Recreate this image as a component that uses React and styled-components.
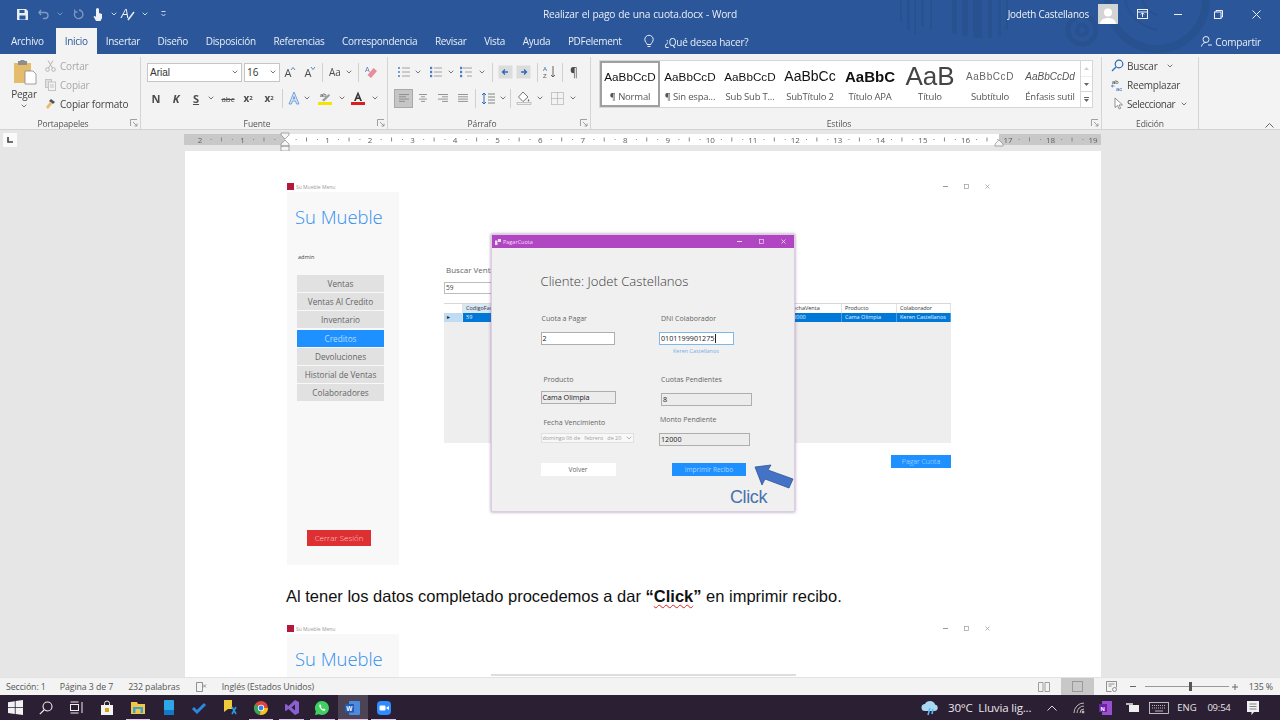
import React from 'react';
import styled, { createGlobalStyle } from 'styled-components';

const Global = createGlobalStyle`
  html, body { margin: 0; padding: 0; background: #e6e6e6; }
  * { box-sizing: border-box; }
  body { font-family: "Open Sans", "Noto Sans", sans-serif; }
`;
const UI = `"Open Sans", "Noto Sans", sans-serif`;
const Frame = styled.div`
  width: 1280px; height: 720px; overflow: hidden; display: flex; flex-direction: column;
  filter: blur(0.35px); font-family: ${UI};
`;
const Svg = styled.svg`display: block; flex: none; overflow: visible;`;

/* ---------- title bar ---------- */
const Head = styled.div`position: relative; background: #2b579a; flex: none;`;
const Deco = styled.svg`position: absolute; right: 0; top: 0; display: block; overflow: hidden;`;
const TitleBar = styled.header`
  position: relative; height: 28px; color: #fff; display: flex; align-items: center;
`;
const Qat = styled.div`display: flex; align-items: center; padding-left: 15px; width: 380px;`;
const QatBtn = styled.span`width: ${p => p.$w}px; margin-left: ${p => p.$ml ?? 0}px; display: flex; justify-content: center; align-items: center; opacity: ${p => p.$dim ? .4 : 1};`;
const DocName = styled.div`position: absolute; left: 0; right: 0; top: 7px; text-align: center; font-size: 10.2px; letter-spacing: -.2px; line-height: 14px; color: #e9eef6; word-spacing: .5px;`;
const TitleRight = styled.div`margin-left: auto; display: flex; align-items: center; position: relative;`;
const UserName = styled.span`font-size: 9.9px; letter-spacing: -.2px; color: #eef2f8; margin-right: 9px;`;
const Avatar = styled.span`width: 20px; height: 20px; background: #d4d4d4; display: flex; align-items: flex-end; justify-content: center; overflow: hidden; margin-right: 14px;`;
const WinBtn = styled.span`width: ${p => p.$w}px; display: flex; justify-content: center; align-items: center;`;

/* ---------- tabs ---------- */
const TabBar = styled.nav`
  position: relative; height: 26px; display: flex; align-items: flex-end; padding-left: 11px;
`;
const Tab = styled.span`
  height: ${p => p.$active ? 26 : 25}px; line-height: ${p => p.$active ? 26 : 25}px;
  margin-right: ${p => p.$gap ?? 17.6}px; font-size: 10px; letter-spacing: -.3px; white-space: nowrap;
  color: ${p => p.$active ? '#2b579a' : '#e8edf5'}; background: ${p => p.$active ? '#f3f3f3' : 'transparent'};
  width: ${p => p.$active ? '41px' : 'auto'}; text-align: center;
`;
const TellMe = styled.span`display: flex; align-items: center; gap: 11px; height: 25px; margin-left: 22px; font-size: 10px; letter-spacing: -.2px; color: #e8edf5;`;
const Share = styled.span`position: relative; display: flex; align-items: center; gap: 3px; height: 25px; margin-left: auto; margin-right: 19px; font-size: 10px; letter-spacing: -.2px; color: #e8edf5;`;

/* ---------- ribbon ---------- */
const Ribbon = styled.section`
  height: 76px; background: #f3f3f3; display: flex; flex: none; padding-top: 3px; border-bottom: 1px solid #d2d2d2;
`;
const Group = styled.div`
  position: relative; width: ${p => p.$w}px; height: 72px; border-right: 1px solid #d4d4d4; flex: none;
  display: flex; flex-direction: column;
`;
const GroupBody = styled.div`height: 62px; display: flex; padding-left: ${p => p.$pl ?? 0}px; flex-direction: ${p => p.$row ? 'row' : 'column'};`;
const GroupLabel = styled.div`height: 10px; line-height: 10px; text-align: center; font-size: 8.5px; letter-spacing: -.1px; color: #555; padding-right: ${p => p.$pr ?? 14}px;`;
const Launcher = styled.span`position: absolute; right: 1px; bottom: 1px; width: 9px; height: 9px;`;
const PasteCol = styled.div`width: 45px; display: flex; flex-direction: column; align-items: center; padding-top: 3px; font-size: 10px; letter-spacing: -.2px; color: #444; line-height: 12px;`;
const PasteName = styled.span`margin: 3px 3px 0 0;`;
const PasteDown = styled.span`margin: 4px 3px 0 0;`;
const ClipList = styled.div`display: flex; flex-direction: column; margin: -1px 0 0 -3px;`;
const ClipItem = styled.div`
  display: flex; align-items: center; gap: ${p => p.$gap ?? 4}px; height: 19px; font-size: 10px; letter-spacing: ${p => p.$ls ?? -.2}px; white-space: nowrap;
  color: ${p => p.$dim ? '#a8a8a8' : '#444'};
`;
const ItemDown = styled.span`margin-left: ${p => p.$ml ?? 3}px;`;
const ToolRow = styled.div`display: flex; align-items: center; height: 24px; margin-top: ${p => p.$mt ?? 0}px;`;
const Tool = styled.span`
  width: ${p => p.$w}px; height: ${p => p.$h ?? 19}px; flex: none; display: flex; align-items: center; justify-content: center;
  background: ${p => p.$on ? '#c6c6c6' : 'transparent'}; border: ${p => p.$on ? '1px solid #a9a9a9' : '0'};
  font-size: ${p => p.$fs ?? 10}px; font-weight: ${p => p.$b ? 700 : 400}; font-style: ${p => p.$i ? 'italic' : 'normal'}; color: #4c4c4c;
  text-decoration: ${p => p.$deco ?? 'none'};
`;
const Chev = styled.span`width: ${p => p.$w}px; flex: none; display: flex; justify-content: center;`;
const VSep = styled.span`width: ${p => p.$w}px; height: 19px; flex: none; display: flex; justify-content: center; &::after { content: ""; width: 1px; background: #d0d0d0; }`;
const Combo = styled.span`
  width: ${p => p.$w}px; height: 19px; flex: none; background: #fff; border: 1px solid #c6c6c6; margin-right: ${p => p.$mr ?? 0}px;
  display: flex; align-items: center; justify-content: space-between; padding: 0 3px 0 2px;
  font-family: ${p => p.$arial ? '"Liberation Sans", Arial' : UI}, sans-serif; font-size: 10px; color: #333;
`;
const Gallery = styled.div`
  margin: 3px 0 0 8px; width: 494px; height: 48px; background: #fff; border: 1px solid #d6d6d6; display: flex;
`;
const StyleCard = styled.div`
  width: 60px; height: 46px; flex: none; display: flex; flex-direction: column; align-items: center; overflow: hidden;
  border: 2px solid ${p => p.$sel ? '#a0a0a0' : 'transparent'};
`;
const Sample = styled.div`
  height: 26px; width: 56px; white-space: nowrap; display: flex; align-items: center; justify-content: center;
  font-family: "Liberation Sans", Arial, sans-serif; font-size: ${p => p.$fs ?? 11.7}px; font-weight: ${p => p.$b ? 700 : 400};
  font-style: ${p => p.$i ? 'italic' : 'normal'}; color: ${p => p.$c ?? '#111'}; letter-spacing: ${p => p.$ls ?? 0}px;
`;
const SampleName = styled.div`font-size: 9.5px; letter-spacing: -.2px; color: #555; white-space: nowrap; line-height: 14px; margin-top: 1px;`;
const GalleryScroll = styled.div`width: 12px; margin-left: auto; border-left: 1px solid #d6d6d6; display: flex; flex-direction: column;`;
const ScrollBtn = styled.span`flex: 1; display: flex; align-items: center; justify-content: center; border-bottom: 1px solid #d6d6d6; &:last-child { border-bottom: 0; } opacity: ${p => p.$dim ? .4 : 1};`;
const EditList = styled.div`display: flex; flex-direction: column; padding-left: 9px; margin-top: -1px;`;
const Collapse = styled.div`flex: 1; display: flex; align-items: flex-end; justify-content: flex-end; padding: 0 6px 1px 0;`;

/* ---------- ruler ---------- */
const RulerBand = styled.div`height: 21px; background: #e6e6e6; display: flex; flex: none; padding-top: 4px;`;
const TabStop = styled.span`width: 14px; height: 14px; margin: -1px 0 0 3px; background: #fafafa; display: flex; align-items: center; justify-content: center;`;
const RulerWrap = styled.div`margin-left: 167px; width: 917px;`;

/* ---------- document ---------- */
const DocArea = styled.main`flex: 1; min-height: 0; overflow: hidden; background: #e6e6e6;`;
const Page = styled.article`width: 916px; margin-left: 185px; background: #fff; padding: 31px 0 0 102px; height: 600px;`;
const Shot = styled.figure`position: relative; margin: 0; width: 714px; height: ${p => p.$h}px;`;
const AppTitle = styled.div`height: 9px; margin-bottom: 1px; display: flex; align-items: center; gap: 2px; font-size: 5px; color: #9a9a9a; line-height: 8px;`;
const AppLogo = styled.span`width: 7px; height: 7px; background: #b3193a; display: block;`;
const AppCtrls = styled.div`margin-left: auto; margin-right: 11px; display: flex; gap: 16px; align-items: center;`;
const AppBody = styled.div`display: flex;`;
const Sidebar = styled.aside`width: 112px; height: 373px; flex: none; background: #f8f8f8; display: flex; flex-direction: column; padding-top: 12px;`;
const Brand = styled.div`font-size: 18.4px; line-height: 26px; color: #2f8fee; padding-left: 8px; white-space: nowrap; font-weight: 300;`;
const AdminName = styled.div`margin: 22px 0 0 11px; font-size: 5.5px; line-height: 10px; color: #444;`;
const NavList = styled.div`display: flex; flex-direction: column; gap: 1.2px; margin: 13px 0 0 10px; width: 87px;`;
const NavBtn = styled.div`
  height: 17px; line-height: 17px; text-align: center; font-size: 8.2px; white-space: nowrap;
  background: ${p => p.$on ? '#1e90ff' : '#e1e1e1'}; color: ${p => p.$on ? '#bcdcff' : '#666'};
`;
const Logout = styled.div`
  margin: auto 0 19px 20px; width: 64px; height: 16px; line-height: 16px; background: #de3033; color: #f8cfcf;
  text-align: center; font-size: 8px; font-weight: 300;
`;
const MainPane = styled.div`width: 507px; margin-left: 45px; flex: none; padding-top: 73px; display: flex; flex-direction: column;`;
const SearchLabel = styled.div`height: 10px; line-height: 10px; margin-left: 2px; font-size: 8px; color: #666; white-space: nowrap;`;
const SearchBox = styled.div`margin-top: 7px; height: 12px; width: 100px; border: 1px solid #bdbdbd; font-size: 6.5px; line-height: 10px; padding-left: 1px; color: #444;`;
const Grid = styled.div`margin-top: 9px; height: 140px; background: #eeeeee; font-size: 5.5px;`;
const GridRow = styled.div`display: grid; grid-template-columns: 19px 62px 262px 55px 55px 54px; height: ${p => p.$h}px; ${p => p.$head ? 'background:#fff; border-top: 1px solid #d8d8d8;' : ''}`;
const GridCell = styled.span`
  line-height: ${p => p.$lh}px; padding-left: 3px; white-space: nowrap; overflow: hidden;
  background: ${p => p.$bg ?? 'transparent'}; color: ${p => p.$c ?? '#333'};
  border-right: 1px solid ${p => p.$line ?? '#e2e2e2'};
`;
const PagarBtn = styled.div`align-self: flex-end; margin-top: 12px; width: 60px; height: 13px; line-height: 13px; background: #1e90ff; color: #bfe0ff; text-align: center; font-size: 7px; font-weight: 300;`;

const Dialog = styled.div`
  position: absolute; left: 204px; top: 52px; width: 304px; height: 278px; background: #f0f0f0;
  border: 1px solid #dccde4; box-shadow: 0 0 3px rgba(110,70,130,.6); display: flex; flex-direction: column;
`;
const DialogBar = styled.div`height: 13px; background: #b146c2; display: flex; align-items: center; padding-left: 3px; flex: none; font-size: 5.5px; color: #f3ddf7; gap: 2px;`;
const DialogCtrls = styled.div`margin-left: auto; display: flex; align-items: center;`;
const DialogCtrl = styled.span`width: 22px; display: flex; justify-content: center;`;
const DialogBody = styled.div`position: relative; padding: 24px 0 0 48.5px; flex: 1;`;
const ClientTitle = styled.div`height: 18px; line-height: 18px; font-size: 13.1px; font-weight: 300; color: #3a3a3a; white-space: nowrap;`;
const Columns = styled.div`display: grid; grid-template-columns: 118.5px 100px; margin-top: 23px;`;
const Col = styled.div`display: flex; flex-direction: column; align-items: flex-start;`;
const FieldLabel = styled.div`height: 12px; line-height: 12px; font-size: 7px; color: #666; white-space: nowrap; margin-top: ${p => p.$mt ?? 0}px; margin-left: ${p => p.$ml ?? 0}px;`;
const Input = styled.div`
  height: 13px; width: ${p => p.$w}px; line-height: 11px; padding-left: 1px; white-space: nowrap;
  font-size: 7.2px; color: #222; margin-top: ${p => p.$mt ?? 0}px; margin-left: ${p => p.$ml ?? 0}px;
  background: ${p => p.$ro ? '#ececec' : '#fff'}; border: 1px solid ${p => p.$focus ? '#7db8e8' : '#aeaeae'};
  display: flex; align-items: ${p => p.$low ? 'flex-end' : 'center'};
`;
const Caret = styled.span`width: 1px; height: 9px; background: #222; margin-left: 1px;`;
const LinkName = styled.div`height: 8px; line-height: 8px; margin: 1.5px 0 0 14px; font-size: 5.5px; color: #79aeea; white-space: nowrap;`;
const DatePick = styled.div`
  width: 93px; height: 10px; margin-top: 4.5px; background: #f8f8f8; border: 1px solid #e0e0e0;
  display: flex; align-items: center; justify-content: space-between; padding: 0 1px 0 1px; font-size: 5.4px; color: #a0a0a0; white-space: pre;
`;
const DlgBtn = styled.div`
  height: 13px; width: ${p => p.$w}px; line-height: 13px; text-align: center; font-size: 6.5px;
  margin-top: ${p => p.$mt ?? 0}px; margin-left: ${p => p.$ml ?? 0}px;
  background: ${p => p.$primary ? '#1e90ff' : '#fff'}; color: ${p => p.$primary ? '#a9d5ff' : '#666'};
`;
const CalloutArrow = styled(Svg)`position: absolute; left: 262px; top: 216px;`;
const CalloutText = styled.div`position: absolute; left: 238px; top: 238px; font-family: "Liberation Sans", Arial, sans-serif; font-size: 18px; line-height: 22px; color: #4a72ad; letter-spacing: -.4px;`;
const DialogPeek = styled.div`position: absolute; left: 204px; top: 50px; width: 305px; height: 2px; background: #dedede;`;
const BodyText = styled.p`
  margin: 20px 0 18px -1px; height: 20px; line-height: 20px; font-family: "Liberation Sans", Arial, sans-serif; font-size: 16.5px; color: #111; white-space: nowrap;
`;
const Strong = styled.b`font-weight: 700;`;
const ClickWord = styled.span`text-decoration: underline wavy #d22; text-decoration-thickness: 1px; text-underline-offset: 2px;`;

/* ---------- status ---------- */
const StatusBar = styled.footer`height: 18px; background: #f3f3f3; flex: none; display: flex; align-items: center; font-size: 8.8px; letter-spacing: -.1px; color: #555; border-top: 1px solid #e2e2e2;`;
const StatusItem = styled.span`margin-left: ${p => p.$ml}px; white-space: nowrap;`;
const StatusRight = styled.div`margin-left: auto; display: flex; align-items: center; height: 100%; padding-right: 7px;`;
const ViewBtn = styled.span`width: ${p => p.$w}px; margin-left: ${p => p.$ml ?? 0}px; height: 100%; display: flex; align-items: center; justify-content: center; background: ${p => p.$on ? '#c8c8c8' : 'transparent'};`;
const Zoomer = styled.span`position: relative; width: 84px; height: 1px; background: #999; margin: 0 2px 0 4px; display: block;`;
const Thumb = styled.span`position: absolute; left: 44px; top: -4px; width: 3px; height: 9px; background: #555;`;

/* ---------- taskbar ---------- */
const Taskbar = styled.footer`height: 25px; background: #2b1f33; flex: none; display: flex; align-items: center; color: #eee;`;
const TaskSlot = styled.span`
  position: relative; width: 30.7px; height: 25px; flex: none; display: flex; align-items: center; justify-content: center;
  background: ${p => p.$active ? '#4c4354' : 'transparent'};
  ${p => p.$running ? `&::after { content: ""; position: absolute; left: ${p.$active ? 0 : 3}px; right: ${p.$active ? 0 : 3}px; bottom: 0; height: 1px; background: #e3c4ee; }` : ''}
`;
const Tray = styled.div`margin-left: auto; display: flex; align-items: center; padding-right: 7px; height: 100%;`;
const TrayItem = styled.span`width: ${p => p.$w}px; flex: none; display: flex; align-items: center; justify-content: ${p => p.$left ? 'flex-start' : 'center'}; padding-left: ${p => p.$left ? 3 : 0}px; font-size: ${p => p.$fs ?? 9}px; white-space: pre; color: #e8e4ea; letter-spacing: ${p => p.$ls ?? 0}px;`;

/* ---------- icons ---------- */
const Down = ({ c = '#666' }) => <Svg width="6" height="4" viewBox="0 0 6 4"><path d="M.7.7 3 3 5.3.7" fill="none" stroke={c} strokeWidth=".9" /></Svg>;
const Lines = ({ kind }) => {
  const sets = {
    left: [[1, 11], [1, 8], [1, 11], [1, 7]], center: [[2, 10], [4, 8], [2, 10], [4, 8]],
    right: [[1, 11], [5, 11], [1, 11], [5, 11]], just: [[1, 11], [1, 11], [1, 11], [1, 11]],
  }[kind];
  return <Svg width="12" height="10" viewBox="0 0 12 10">{sets.map((s, i) => <path key={i} d={`M${s[0]} ${1.5 + i * 2.3}H${s[1]}`} stroke="#8a8a8a" strokeWidth=".9" />)}</Svg>;
};
const ListIco = ({ kind }) => (
  <Svg width="14" height="12" viewBox="0 0 14 12">
    {[2, 6, 10].map((y, i) => <g key={y}>
      {kind === 'bul' ? <circle cx="2" cy={y} r="1" fill="#4a7fc0" /> : <rect x="1" y={y - 1.2} width="2.2" height="2.4" fill="#4a7fc0" />}
      <path d={`M${kind === 'multi' ? 4 + i * 2 : 5} ${y}H13`} stroke="#9a9a9a" strokeWidth=".9" />
    </g>)}
  </Svg>
);
const IndentIco = ({ flip }) => (
  <Svg width="15" height="14" viewBox="0 0 15 14">
    <rect x=".5" y=".5" width="14" height="13" fill="#dcdcdc" />
    <path d={flip ? 'M5 7H10M8 4.5 10.5 7 8 9.5' : 'M10 7H5M7 4.5 4.5 7 7 9.5'} fill="none" stroke="#2b6cb8" strokeWidth="1.3" />
  </Svg>
);
const Launch = () => <Svg width="8" height="8" viewBox="0 0 8 8"><path d="M.5 7V.5H7M3 3 7 7M7 4.5V7H4.5" fill="none" stroke="#8a8a8a" strokeWidth=".8" /></Svg>;
const Paste = () => (
  <Svg width="23" height="25" viewBox="0 0 23 25">
    <rect x="0" y="3" width="17" height="20" fill="#e5bb6c" />
    <rect x="4" y="1" width="9" height="4" fill="#8e8e8e" /><rect x="6.5" y="0" width="4" height="2" fill="#8e8e8e" />
    <path d="M11 11h8l3 3v10H11z" fill="#fff" stroke="#888" strokeWidth=".8" />
  </Svg>
);
const Cut = () => <Svg width="11" height="12" viewBox="0 0 11 12" fill="none" stroke="#b4b4b4"><circle cx="2.5" cy="9.5" r="1.8" /><circle cx="8.5" cy="9.5" r="1.8" /><path d="M3.5 8 8 .5M7.5 8 3 .5" /></Svg>;
const CopyI = () => <Svg width="11" height="12" viewBox="0 0 11 12" fill="none" stroke="#c4c4c4"><rect x=".5" y=".5" width="6" height="8" fill="#e0e0e0" /><rect x="3.5" y="3" width="7" height="8.5" fill="#f3f3f3" /><path d="M5 6h4M5 8h4" /></Svg>;
const Brush = () => <Svg width="11" height="12" viewBox="0 0 11 12"><path d="M6 1l4 3-2 2-4-3z" fill="#555" /><path d="M5 4 1 9l2 2 4-5z" fill="#e7bd6b" /></Svg>;
const BigA = ({ up }) => <Tool $w={20} $fs={11}>A<Svg width="4" height="3" viewBox="0 0 4 3" style={{ marginBottom: 7 }}><path d={up ? 'M0 3 2 .5 4 3' : 'M0 0 2 2.5 4 0'} fill="none" stroke="#2b6cb8" strokeWidth=".8" /></Svg></Tool>;
const Eraser = () => <Svg width="14" height="14" viewBox="0 0 14 14"><path d="M7 13 13 6 9.5 3 3.5 10z" fill="#e88c9c" /><text x="1" y="7" fontSize="7" fill="#5a7ab0" fontFamily="Liberation Sans">A</text></Svg>;
const ColorA = ({ bar }) => <Svg width="14" height="14" viewBox="0 0 14 14"><path d="M7 0.5 3 10h1.8l.8-2h2.8l.8 2H11zM6.2 6.500 7 4l.8 2.500z" fill="#333" fillRule="evenodd" /><rect y="11" width="14" height="3" fill={bar} /></Svg>;
const OutlineA = () => <Svg width="14" height="14" viewBox="0 0 14 14"><path d="M7 1 2 13h2.5L5.5 10h3l1 3H12z M6.2 8 7 5.5 7.8 8z" fill="#dbe7f6" stroke="#5a8fd0" strokeWidth=".8" /></Svg>;
const Marker = () => <Svg width="14" height="14" viewBox="0 0 14 14"><text x="2" y="6" fontSize="6" fill="#444" fontFamily="Liberation Sans">ab</text><path d="M4 9 11 3l1 1.5L6 10.5z" fill="#999" /><rect y="11" width="14" height="3" fill="#f5e400" /></Svg>;
const Spacing = () => <Svg width="14" height="13" viewBox="0 0 14 13"><path d="M3 1v11M1 3l2-2 2 2M1 10l2 2 2-2" fill="none" stroke="#2b6cb8" strokeWidth="1" /><path d="M7 2h7M7 5h7M7 8h7M7 11h7" stroke="#777" strokeWidth=".9" /></Svg>;
const Bucket = () => <Svg width="14" height="14" viewBox="0 0 14 14"><path d="M6 1 1.5 6 6 10.5 11 6z" fill="#fff" stroke="#666" strokeWidth=".9" /><path d="M11.5 8c1 1.4 1 2.4 0 2.6-1-.2-1-1.2 0-2.6z" fill="#666" /><rect y="11.5" width="14" height="2" fill="#eee" stroke="#999" strokeWidth=".5" /></Svg>;
const Borders = () => <Svg width="13" height="13" viewBox="0 0 13 13"><path d="M.5.5h12v12H.5zM6.5.5v12M.5 6.5h12" fill="none" stroke="#9a9a9a" strokeDasharray="1 1" /></Svg>;
const Sort = () => <Svg width="14" height="14" viewBox="0 0 14 14"><text x="0" y="6" fontSize="6" fill="#2b6cb8" fontFamily="Liberation Sans">A</text><text x="0" y="13" fontSize="6" fill="#555" fontFamily="Liberation Sans">Z</text><path d="M10 1v11M8 10l2 2 2-2" fill="none" stroke="#555" strokeWidth=".9" /></Svg>;
const SearchI = () => <Svg width="13" height="13" viewBox="0 0 13 13" fill="none" stroke="#2b6cb8" strokeWidth="1.2"><circle cx="8" cy="5" r="3.8" /><path d="M5 8 1 12" /></Svg>;
const ReplaceI = () => <Svg width="13" height="13" viewBox="0 0 13 13"><text x="1" y="5.5" fontSize="6" fill="#333" fontFamily="Liberation Sans">ab</text><text x="5" y="12.5" fontSize="6" fill="#2b6cb8" fontFamily="Liberation Sans">ac</text><path d="M.5 8h3M2 6.8.5 8 2 9.2" stroke="#2b6cb8" strokeWidth=".7" fill="none" /></Svg>;
const SelectI = () => <Svg width="13" height="13" viewBox="0 0 13 13"><path d="M4 1v9.5l2.500-2 1.700 3.500 1.500-.7-1.700-3.400h3.500z" fill="#fff" stroke="#777" strokeWidth=".8" /></Svg>;
const Min = ({ c = '#9a9a9a' }) => <Svg width="5" height="1" viewBox="0 0 5 1"><path d="M0 .5h5" stroke={c} /></Svg>;
const Max = ({ c = '#9a9a9a' }) => <Svg width="5" height="5" viewBox="0 0 5 5"><rect x=".5" y=".5" width="4" height="4" fill="none" stroke={c} strokeWidth=".7" /></Svg>;
const Cls = ({ c = '#9a9a9a' }) => <Svg width="5" height="5" viewBox="0 0 5 5"><path d="M.5.5l4 4M4.5.5l-4 4" stroke={c} strokeWidth=".7" /></Svg>;
const AppHead = () => <AppTitle><AppLogo />Su Mueble Menu<AppCtrls><Min /><Max /><Cls /></AppCtrls></AppTitle>;
const Win = () => <Svg width="15" height="15" viewBox="0 0 15 15" fill="#f2f2f2"><path d="M0 2.2 6.8 1.2v6H0zM7.6 1.100 15 0v7.2H7.6zM0 8h6.8v6L0 13zM7.6 8H15v7l-7.4-1z" /></Svg>;

const RULER_NUMS = Array.from({ length: 22 }, (_, i) => i - 2);
const Ruler = () => (
  <Svg width="917" height="11" viewBox="0 0 917 11" fontFamily="Open Sans" fontSize="8" fill="#606060">
    <rect width="917" height="11" fill="#fff" />
    <rect width="101" height="11" fill="#c8c8c8" />
    <rect x="815" width="102" height="11" fill="#c8c8c8" />
    {RULER_NUMS.map(n => {
      const x = 101 + n * 42.53;
      return <g key={n}>
        {n !== 0 && <text x={x} y="8.5" textAnchor="middle">{Math.abs(n)}</text>}
        {[10.6, 31.9].map(d => x + d < 915 && <rect key={d} x={x + d} y="5" width="1" height="1" fill="#888" />)}
        {x + 21 < 915 && <rect x={x + 21} y="3.5" width="1" height="4" fill="#888" />}
      </g>;
    })}
    <path d="M97 -1h8v2l-4 4-4-4zM101 6l4 4v2h-8v-2zM97 12h8v5h-8z" fill="#f5f5f5" stroke="#888" strokeWidth=".7" />
    <path d="M815 6l4 4v2h-8v-2z" fill="#f5f5f5" stroke="#888" strokeWidth=".7" />
  </Svg>
);

const NAV = ['Ventas', 'Ventas Al Credito', 'Inventario', 'Creditos', 'Devoluciones', 'Historial de Ventas', 'Colaboradores'];
const Side = ({ full }) => (
  <Sidebar>
    <Brand>Su Mueble</Brand>
    {full && <>
      <AdminName>admin</AdminName>
      <NavList>{NAV.map(n => <NavBtn key={n} $on={n === 'Creditos'}>{n}</NavBtn>)}</NavList>
      <Logout>Cerrar Sesión</Logout>
    </>}
  </Sidebar>
);
const STYLES = [
  { t: 'AaBbCcD', n: '¶ Normal', sel: true },
  { t: 'AaBbCcD', n: '¶ Sin espa...' },
  { t: 'AaBbCcD', n: 'Sub Sub T...' },
  { t: 'AaBbCc', n: 'SubTítulo 2', fs: 14 },
  { t: 'AaBbC', n: 'Título APA', fs: 15, b: true },
  { t: 'AaB', n: 'Título', fs: 26, c: '#444' },
  { t: 'AaBbCcD', n: 'Subtítulo', fs: 10, c: '#666', ls: .6 },
  { t: 'AaBbCcDd', n: 'Énfasis sutil', fs: 10, i: true, c: '#555' },
];
const Taskicons = {
  store: <Svg width="12" height="14" viewBox="0 0 12 14"><path d="M3.5 4V2.5a2.5 2.5 0 0 1 5 0V4" fill="none" stroke="#eee" /><rect y="4" width="12" height="10" fill="#f2f2f2" /><rect x="4" y="7" width="4" height="4" fill="#d9a21b" /></Svg>,
  files: <Svg width="14" height="13" viewBox="0 0 14 13"><path d="M0 1h6l1 2h7v10H0z" fill="#f3c744" /><rect x="2" y="6" width="10" height="6" fill="#3aa3d8" /><rect x="4.5" y="8" width="5" height="4" fill="#f3c744" /></Svg>,
  phone: <Svg width="10" height="15" viewBox="0 0 10 15"><rect width="10" height="15" rx="1" fill="#2fa6e8" /><rect y="10" width="10" height="5" fill="#1478c8" /></Svg>,
  todo: <Svg width="14" height="12" viewBox="0 0 14 12"><path d="M1 6l4 4 8-8" fill="none" stroke="#2b87e0" strokeWidth="3" /></Svg>,
  sticky: <Svg width="14" height="15" viewBox="0 0 14 15"><path d="M1 0h8v9H5l-4 3z" fill="#eecb3a" /><path d="M9 7l4 7M13 7l-4 7" stroke="#2a9bd8" strokeWidth="1.6" /></Svg>,
  chrome: <Svg width="14" height="14" viewBox="0 0 14 14"><circle cx="7" cy="7" r="7" fill="#e0443a" /><path d="M7 7 1 3.5A7 7 0 0 0 6 14z" fill="#34a853" /><path d="M7 7h7a7 7 0 0 1-8 7z" fill="#f5c21b" /><circle cx="7" cy="7" r="3.2" fill="#fff" /><circle cx="7" cy="7" r="2.4" fill="#3a7fe8" /></Svg>,
  vs: <Svg width="14" height="15" viewBox="0 0 14 15"><path d="M10 0l4 2v11l-4 2L3.5 9 1 11 0 10.5v-6L1 4l2.5 2zM10 4.5 6.5 7.5l3.5 3z" fill="#8a5fd0" fillRule="evenodd" /></Svg>,
  wa: <Svg width="14" height="14" viewBox="0 0 14 14"><path d="M7 0a7 7 0 0 1 0 14c-1.2 0-2.3-.3-3.3-.8L0 14l.9-3.5A7 7 0 0 1 7 0z" fill="#3fd05f" /><path d="M4.5 3.5c-1 1.6.5 4 2 5.2s3 1.6 3.6.7l.4-1-1.7-.9-.7.7c-1-.4-1.8-1.3-2.2-2.2l.6-.7-.8-1.8z" fill="#fff" /></Svg>,
  word: <Svg width="15" height="14" viewBox="0 0 15 14"><rect x="4" width="11" height="14" rx="1" fill="#4b8be0" /><rect x="0" y="3" width="9" height="8.5" fill="#1d5bb5" /><text x="1.2" y="9.6" fontSize="6.5" fontWeight="700" fill="#fff" fontFamily="Liberation Sans">W</text></Svg>,
  zoom: <Svg width="14" height="14" viewBox="0 0 14 14"><rect width="14" height="14" rx="4" fill="#2d8cff" /><rect x="2.5" y="4.5" width="6" height="5" rx="1" fill="#fff" /><path d="M9.5 6.5 12 5v4l-2.5-1.5z" fill="#fff" /></Svg>,
};
const STRIPES = [[20, 2, 22], [27, 3, 30], [34, 2, 34], [41, 3, 26], [50, 2, 30], [72, 5, 34], [82, 6, 36], [93, 9, 38], [108, 4, 38], [118, 3, 36], [126, 2, 30]];

export default function App() {
  return (
    <Frame>
      <Global />
      <Head>
        <Deco width="400" height="54" viewBox="0 0 400 54" fill="none" stroke="#285190">
          {STRIPES.map(([x, w, h]) => <rect key={x} x={x} y="0" width={w} height={h} fill="#285190" stroke="none" />)}
          <circle cx="202" cy="30" r="5" strokeWidth="4" /><circle cx="202" cy="30" r="14" strokeWidth="5" />
          <circle cx="277" cy="0" r="49" strokeWidth="8" />
          <path d="M245 0c4 16 14 26 32 30M262 0c3 8 8 13 15 15" strokeWidth="2" />
        </Deco>
        <TitleBar>
          <Qat>
            <QatBtn $w={14}><Svg width="11" height="11" viewBox="0 0 11 11"><path d="M0 0h9l2 2v9H0z" fill="#e8edf5" /><rect x="2.5" y="1" width="5" height="3" fill="#2b579a" /><rect x="2.5" y="6.5" width="6" height="4" fill="#2b579a" /></Svg></QatBtn>
            <QatBtn $w={18} $ml={5} $dim><Svg width="11" height="10" viewBox="0 0 11 10" fill="none" stroke="#fff" strokeWidth="1.3"><path d="M3 1 1 3.5 3 6M1.5 3.5H7a3 3 0 0 1 0 6H5" /></Svg></QatBtn>
            <QatBtn $w={16} $dim><Down c="#fff" /></QatBtn>
            <QatBtn $w={20} $dim><Svg width="11" height="11" viewBox="0 0 11 11" fill="none" stroke="#fff" strokeWidth="1.3"><path d="M6 1A4.3 4.3 0 1 1 2 3M1.5.5 2 3.3l2.6-.4" /></Svg></QatBtn>
            <QatBtn $w={20}><Svg width="10" height="13" viewBox="0 0 10 13"><path d="M3 1.5a1.5 1.5 0 0 1 3 0V5l3 1v4l-1.5 3H3L.5 8.5 2 8l1 1z" fill="#eef2f8" /></Svg></QatBtn>
            <QatBtn $w={12}><Down c="#dfe6f1" /></QatBtn>
            <QatBtn $w={16}><Svg width="14" height="13" viewBox="0 0 14 13"><text x="0" y="10" fontSize="12" fontStyle="italic" fill="#eef2f8" fontFamily="Liberation Sans">A</text><path d="M7 12 13 4" stroke="#eef2f8" strokeWidth="1.4" /></Svg></QatBtn>
            <QatBtn $w={18}><Down c="#dfe6f1" /></QatBtn>
            <QatBtn $w={18}><Svg width="5" height="6" viewBox="0 0 5 6"><path d="M.5.5h4M.5 3l2 2 2-2" fill="none" stroke="#dfe6f1" strokeWidth=".9" /></Svg></QatBtn>
          </Qat>
          <DocName>Realizar el pago de una cuota.docx  -  Word</DocName>
          <TitleRight>
            <UserName>Jodeth Castellanos</UserName>
            <Avatar><Svg width="16" height="17" viewBox="0 0 16 17"><circle cx="8" cy="5.5" r="4" fill="#fff" /><path d="M0 17c0-4 4-6 8-6s8 2 8 6z" fill="#fff" /></Svg></Avatar>
            <WinBtn $w={20}><Svg width="11" height="10" viewBox="0 0 11 10" fill="none" stroke="#eef2f8"><rect x=".5" y=".5" width="10" height="9" /><path d="M.5 3h10M5.5 8V4M3.8 5.5 5.5 3.8 7.2 5.5" /></Svg></WinBtn>
            <WinBtn $w={52}><Svg width="8" height="1" viewBox="0 0 8 1"><path d="M0 .5h8" stroke="#eef2f8" /></Svg></WinBtn>
            <WinBtn $w={28}><Svg width="9" height="9" viewBox="0 0 9 9" fill="none" stroke="#eef2f8"><rect x=".5" y="2" width="6.5" height="6.5" /><path d="M2 2V.5h6.5V7H7" /></Svg></WinBtn>
            <WinBtn $w={48}><Svg width="9" height="9" viewBox="0 0 9 9"><path d="M.5.5l8 8M8.5.5l-8 8" stroke="#eef2f8" /></Svg></WinBtn>
          </TitleRight>
        </TitleBar>

        <TabBar>
          <Tab $gap={12}>Archivo</Tab>
          <Tab $active $gap={9}>Inicio</Tab>
          <Tab>Insertar</Tab><Tab>Diseño</Tab><Tab>Disposición</Tab><Tab>Referencias</Tab>
          <Tab>Correspondencia</Tab><Tab>Revisar</Tab><Tab>Vista</Tab><Tab>Ayuda</Tab><Tab $gap={0}>PDFelement</Tab>
          <TellMe>
            <Svg width="10" height="13" viewBox="0 0 10 13" fill="none" stroke="#e8edf5"><path d="M3 9.5C3 8 .8 7 .8 4.5a4.2 4.2 0 0 1 8.4 0C9.2 7 7 8 7 9.5zM3.5 11.5h3" /></Svg>
            ¿Qué desea hacer?
          </TellMe>
          <Share>
            <Svg width="11" height="11" viewBox="0 0 11 11" fill="none" stroke="#e8edf5"><circle cx="5" cy="3.5" r="3" /><path d="M.5 10.5c.5-2.5 2-4 4.5-4M7 9h4" /></Svg>
            Compartir
          </Share>
        </TabBar>
      </Head>

      <Ribbon>
        <Group $w={141}>
          <GroupBody $row $pl={3}>
            <PasteCol>
              <Paste />
              <PasteName>Pegar</PasteName>
              <PasteDown><Down /></PasteDown>
            </PasteCol>
            <ClipList>
              <ClipItem $dim><Cut />Cortar</ClipItem>
              <ClipItem $dim><CopyI />Copiar</ClipItem>
              <ClipItem><Brush />Copiar formato</ClipItem>
            </ClipList>
          </GroupBody>
          <GroupLabel>Portapapeles</GroupLabel>
          <Launcher><Launch /></Launcher>
        </Group>

        <Group $w={247}>
          <GroupBody $pl={6}>
            <ToolRow $mt={3}>
              <Combo $w={95} $mr={2} $arial>Arial<Down /></Combo>
              <Combo $w={36}>16<Down /></Combo>
              <BigA up /><BigA />
              <VSep $w={4} />
              <Tool $w={22}>Aa</Tool><Chev $w={6}><Down /></Chev>
              <VSep $w={12} />
              <Tool $w={14}><Eraser /></Tool>
            </ToolRow>
            <ToolRow $mt={2}>
              <Tool $w={18} $b $fs={11}>N</Tool>
              <Tool $w={22} $b $i $fs={11}>K</Tool>
              <Tool $w={18} $b $fs={11} $deco="underline">S</Tool>
              <Chev $w={12}><Down /></Chev>
              <Tool $w={22} $fs={8} $deco="line-through">abc</Tool>
              <Tool $w={18} $b>x<sub style={{ fontSize: 6 }}>2</sub></Tool>
              <Tool $w={24} $b>x<sup style={{ fontSize: 6 }}>2</sup></Tool>
              <VSep $w={2} />
              <Tool $w={22}><OutlineA /></Tool><Chev $w={4}><Down /></Chev>
              <Tool $w={32}><Marker /></Tool><Chev $w={2}><Down /></Chev>
              <Tool $w={30}><ColorA bar="#d81e1e" /></Tool><Chev $w={4}><Down /></Chev>
            </ToolRow>
          </GroupBody>
          <GroupLabel>Fuente</GroupLabel>
          <Launcher><Launch /></Launcher>
        </Group>

        <Group $w={203}>
          <GroupBody $pl={6}>
            <ToolRow $mt={3}>
              <Tool $w={19}><ListIco kind="bul" /></Tool><Chev $w={10}><Down /></Chev>
              <Tool $w={26}><ListIco kind="num" /></Tool><Chev $w={4}><Down /></Chev>
              <Tool $w={26}><ListIco kind="multi" /></Tool><Chev $w={6}><Down /></Chev>
              <VSep $w={14} />
              <Tool $w={12}><IndentIco /></Tool><Tool $w={24}><IndentIco flip /></Tool>
              <VSep $w={4} />
              <Tool $w={22}><Sort /></Tool>
              <VSep $w={2} />
              <Tool $w={22} $fs={12}>¶</Tool>
            </ToolRow>
            <ToolRow $mt={2}>
              <Tool $w={19} $on><Lines kind="left" /></Tool>
              <Tool $w={20}><Lines kind="center" /></Tool>
              <Tool $w={20}><Lines kind="right" /></Tool>
              <Tool $w={20}><Lines kind="just" /></Tool>
              <VSep $w={4} />
              <Tool $w={22}><Spacing /></Tool><Chev $w={8}><Down /></Chev>
              <VSep $w={6} />
              <Tool $w={22}><Bucket /></Tool><Chev $w={10}><Down /></Chev>
              <Tool $w={24}><Borders /></Tool><Chev $w={8}><Down /></Chev>
            </ToolRow>
          </GroupBody>
          <GroupLabel>Párrafo</GroupLabel>
          <Launcher><Launch /></Launcher>
        </Group>

        <Group $w={511}>
          <GroupBody>
            <Gallery>
              {STYLES.map(s => (
                <StyleCard key={s.n} $sel={s.sel}>
                  <Sample $fs={s.fs} $b={s.b} $i={s.i} $c={s.c} $ls={s.ls}>{s.t}</Sample>
                  <SampleName>{s.n}</SampleName>
                </StyleCard>
              ))}
              <GalleryScroll>
                <ScrollBtn $dim><Svg width="5" height="3" viewBox="0 0 5 3"><path d="M0 3 2.5 0 5 3z" fill="#888" /></Svg></ScrollBtn>
                <ScrollBtn><Svg width="5" height="3" viewBox="0 0 5 3"><path d="M0 0h5L2.5 3z" fill="#666" /></Svg></ScrollBtn>
                <ScrollBtn><Svg width="5" height="5" viewBox="0 0 5 5"><path d="M0 0h5v1H0zM0 2h5L2.5 5z" fill="#666" /></Svg></ScrollBtn>
              </GalleryScroll>
            </Gallery>
          </GroupBody>
          <GroupLabel>Estilos</GroupLabel>
          <Launcher><Launch /></Launcher>
        </Group>

        <Group $w={97}>
          <GroupBody>
            <EditList>
              <ClipItem $gap={3}><SearchI />Buscar<ItemDown $ml={6}><Down /></ItemDown></ClipItem>
              <ClipItem $gap={3}><ReplaceI />Reemplazar</ClipItem>
              <ClipItem $gap={3} $ls={-.45}><SelectI />Seleccionar<ItemDown><Down /></ItemDown></ClipItem>
            </EditList>
          </GroupBody>
          <GroupLabel $pr={0}>Edición</GroupLabel>
        </Group>
        <Collapse><Svg width="9" height="5" viewBox="0 0 9 5"><path d="M.5 4.5 4.5.5l4 4" fill="none" stroke="#666" /></Svg></Collapse>
      </Ribbon>

      <RulerBand>
        <TabStop><Svg width="6" height="6" viewBox="0 0 6 6"><path d="M1 0v5h5" fill="none" stroke="#444" strokeWidth="1.6" /></Svg></TabStop>
        <RulerWrap><Ruler /></RulerWrap>
      </RulerBand>

      <DocArea>
        <Page>
          <Shot $h={384}>
            <AppHead />
            <AppBody>
              <Side full />
              <MainPane>
                <SearchLabel>Buscar Ventas</SearchLabel>
                <SearchBox>59</SearchBox>
                <Grid>
                  <GridRow $head $h={10}>
                    <GridCell $lh={9} />
                    <GridCell $lh={9} $bg="#d9e8f5">CodigoFactura</GridCell>
                    <GridCell $lh={9} />
                    <GridCell $lh={9}>FechaVenta</GridCell>
                    <GridCell $lh={9}>Producto</GridCell>
                    <GridCell $lh={9}>Colaborador</GridCell>
                  </GridRow>
                  <GridRow $h={9}>
                    <GridCell $lh={9} $bg="#bfdcf3" $c="#222">▸</GridCell>
                    {['59', '', '12000', 'Cama Olimpia', 'Keren Castellanos'].map((v, i) => (
                      <GridCell key={i} $lh={9} $bg="#0078d7" $c="#e8f2fb" $line="#4d9fe0">{v}</GridCell>
                    ))}
                  </GridRow>
                </Grid>
                <PagarBtn>Pagar Cuota</PagarBtn>
              </MainPane>
            </AppBody>
            <Dialog>
              <DialogBar>
                <Svg width="6" height="6" viewBox="0 0 6 6"><path d="M0 1.5h2.5V6H0zM3 0h3v3H3z" fill="#e9e2ee" /></Svg>
                PagarCuota
                <DialogCtrls>
                  <DialogCtrl><Min c="#eed5f2" /></DialogCtrl>
                  <DialogCtrl><Max c="#eed5f2" /></DialogCtrl>
                  <DialogCtrl><Cls c="#fff" /></DialogCtrl>
                </DialogCtrls>
              </DialogBar>
              <DialogBody>
                <ClientTitle>Cliente: Jodet Castellanos</ClientTitle>
                <Columns>
                  <Col>
                    <FieldLabel $ml={1}>Cuota a Pagar</FieldLabel>
                    <Input $w={74} $mt={7}>2</Input>
                    <FieldLabel $mt={29} $ml={3}>Producto</FieldLabel>
                    <Input $w={75} $mt={5} $ro>Cama Olimpia</Input>
                    <FieldLabel $mt={12.5} $ml={3}>Fecha Vencimiento</FieldLabel>
                    <DatePick>{'domingo 06 de   febrero   de 20'}<Down c="#aaa" /></DatePick>
                    <DlgBtn $w={75} $mt={20}>Volver</DlgBtn>
                  </Col>
                  <Col>
                    <FieldLabel $ml={2}>DNI Colaborador</FieldLabel>
                    <Input $w={75} $mt={7} $focus>0101199901275<Caret /></Input>
                    <LinkName>Keren Castellanos</LinkName>
                    <FieldLabel $mt={19.5} $ml={2}>Cuotas Pendientes</FieldLabel>
                    <Input $w={91} $mt={7} $ml={2} $ro $low>8</Input>
                    <FieldLabel $mt={8} $ml={1}>Monto Pendiente</FieldLabel>
                    <Input $w={91} $mt={7} $ro $low>12000</Input>
                    <DlgBtn $w={74} $mt={17} $ml={13} $primary>Imprimir Recibo</DlgBtn>
                  </Col>
                </Columns>
                <CalloutArrow width="40" height="28" viewBox="0 0 40 28">
                  <path d="M1 3 17 1l-3 5 25 9-4 9L11 15l-3 6z" fill="#4472c4" stroke="#2f5597" strokeWidth=".8" />
                </CalloutArrow>
                <CalloutText>Click</CalloutText>
              </DialogBody>
            </Dialog>
          </Shot>
          <BodyText>Al tener los datos completado procedemos a dar <Strong>“<ClickWord>Click</ClickWord>”</Strong> en imprimir recibo.</BodyText>
          <Shot $h={200}>
            <AppHead />
            <AppBody><Side /></AppBody>
            <DialogPeek />
          </Shot>
        </Page>
      </DocArea>

      <StatusBar>
        <StatusItem $ml={6}>Sección: 1</StatusItem>
        <StatusItem $ml={14}>Página 3 de 7</StatusItem>
        <StatusItem $ml={15}>232 palabras</StatusItem>
        <StatusItem $ml={16}><Svg width="11" height="10" viewBox="0 0 11 10" fill="none" stroke="#777" strokeWidth=".8"><path d="M.5.5h6v9h-6zM7 2.5l3 3M10 2.5l-3 3" /></Svg></StatusItem>
        <StatusItem $ml={15}>Inglés (Estados Unidos)</StatusItem>
        <StatusRight>
          <ViewBtn $w={30}><Svg width="12" height="10" viewBox="0 0 12 10" fill="none" stroke="#888" strokeWidth=".8"><path d="M.5.5h4.5v9H.5zM7 .5h4.5v9H7z" /></Svg></ViewBtn>
          <ViewBtn $w={33} $ml={2} $on><Svg width="11" height="11" viewBox="0 0 11 11" fill="none" stroke="#999"><rect x=".5" y=".5" width="10" height="10" /></Svg></ViewBtn>
          <ViewBtn $w={24} $ml={6}><Svg width="11" height="11" viewBox="0 0 11 11" fill="none" stroke="#777" strokeWidth=".8"><path d="M.5.5h10v6M.5.5v10h5M2.5 3h6M2.5 5h3" /><circle cx="8.5" cy="8.5" r="2" /></Svg></ViewBtn>
          <ViewBtn $w={16} $ml={1}><Svg width="6" height="1" viewBox="0 0 6 1"><path d="M0 .5h6" stroke="#666" /></Svg></ViewBtn>
          <Zoomer><Thumb /></Zoomer>
          <ViewBtn $w={8}><Svg width="6" height="6" viewBox="0 0 6 6"><path d="M0 3h6M3 0v6" stroke="#666" /></Svg></ViewBtn>
          <StatusItem $ml={10}>135 %</StatusItem>
        </StatusRight>
      </StatusBar>

      <Taskbar>
        <TaskSlot><Win /></TaskSlot>
        <TaskSlot><Svg width="14" height="14" viewBox="0 0 14 14" fill="none" stroke="#eee" strokeWidth="1.1"><circle cx="8.5" cy="5.5" r="4.5" /><path d="M5 9 .8 13.2" /></Svg></TaskSlot>
        <TaskSlot><Svg width="14" height="13" viewBox="0 0 14 13" fill="none" stroke="#eee"><path d="M.5 1h8M.5 12h8" /><rect x=".5" y="3.5" width="8" height="6" /><path d="M12 1v11" /></Svg></TaskSlot>
        <TaskSlot>{Taskicons.store}</TaskSlot>
        <TaskSlot $running>{Taskicons.files}</TaskSlot>
        <TaskSlot>{Taskicons.phone}</TaskSlot>
        <TaskSlot>{Taskicons.todo}</TaskSlot>
        <TaskSlot>{Taskicons.sticky}</TaskSlot>
        <TaskSlot $running>{Taskicons.chrome}</TaskSlot>
        <TaskSlot $running>{Taskicons.vs}</TaskSlot>
        <TaskSlot $running>{Taskicons.wa}</TaskSlot>
        <TaskSlot $running $active>{Taskicons.word}</TaskSlot>
        <TaskSlot $running>{Taskicons.zoom}</TaskSlot>
        <Tray>
          <TrayItem $w={30}><Svg width="18" height="14" viewBox="0 0 18 14"><path d="M4 10a3.5 3.5 0 0 1 0-7c.7-2 2.8-3 5-3 2.6 0 4.5 1.5 5 3.5A3.3 3.3 0 0 1 14 10z" fill="#a9d8f3" /><path d="M9 7l-2 7M12 8l-1 5" stroke="#5fb8ee" strokeWidth="1.6" /></Svg></TrayItem>
          <TrayItem $w={96} $left $fs={11.6} $ls={-.2}>{'30°C  Lluvia lig...'}</TrayItem>
          <TrayItem $w={22}><Svg width="10" height="6" viewBox="0 0 10 6"><path d="M.5 5.5 5 1l4.5 4.5" fill="none" stroke="#ddd" /></Svg></TrayItem>
          <TrayItem $w={32}><Svg width="12" height="12" viewBox="0 0 12 12" fill="none" stroke="#bbb"><path d="M1 11A10 10 0 0 1 11 1M4 11A7 7 0 0 1 11 4M7 11A4 4 0 0 1 11 7" /><circle cx="10" cy="10" r="1" fill="#ddd" /></Svg></TrayItem>
          <TrayItem $w={20}><Svg width="13" height="14" viewBox="0 0 13 14"><rect x="3" width="10" height="14" fill="#9a4fd0" /><rect y="3" width="8" height="8" fill="#6a22a8" /><text x="1.5" y="9.5" fontSize="6" fontWeight="700" fill="#fff" fontFamily="Liberation Sans">N</text></Svg></TrayItem>
          <TrayItem $w={34}><Svg width="13" height="9" viewBox="0 0 13 9"><rect x="3" y="2" width="10" height="7" fill="#eee" /><path d="M0 1h7" stroke="#eee" strokeWidth="1.5" /></Svg></TrayItem>
          <TrayItem $w={20}><Svg width="20" height="12" viewBox="0 0 20 12" fill="none" stroke="#ddd" strokeWidth=".8"><rect x=".5" y=".5" width="19" height="11" /><path d="M3 3.5h14M3 6h14" strokeDasharray="1 1" /><path d="M6 9h8" /></Svg></TrayItem>
          <TrayItem $w={36} $fs={9.5}>ENG</TrayItem>
          <TrayItem $w={28} $fs={9.5} $ls={-.2}>09:54</TrayItem>
          <TrayItem $w={40}><Svg width="12" height="14" viewBox="0 0 12 14"><path d="M0 0h12v11H7l-2.5 3V11H0z" fill="#f2f2f2" /><path d="M2.5 3h7M2.5 5.5h7M2.5 8h7" stroke="#555" strokeWidth=".7" /></Svg></TrayItem>
        </Tray>
      </Taskbar>
    </Frame>
  );
}
